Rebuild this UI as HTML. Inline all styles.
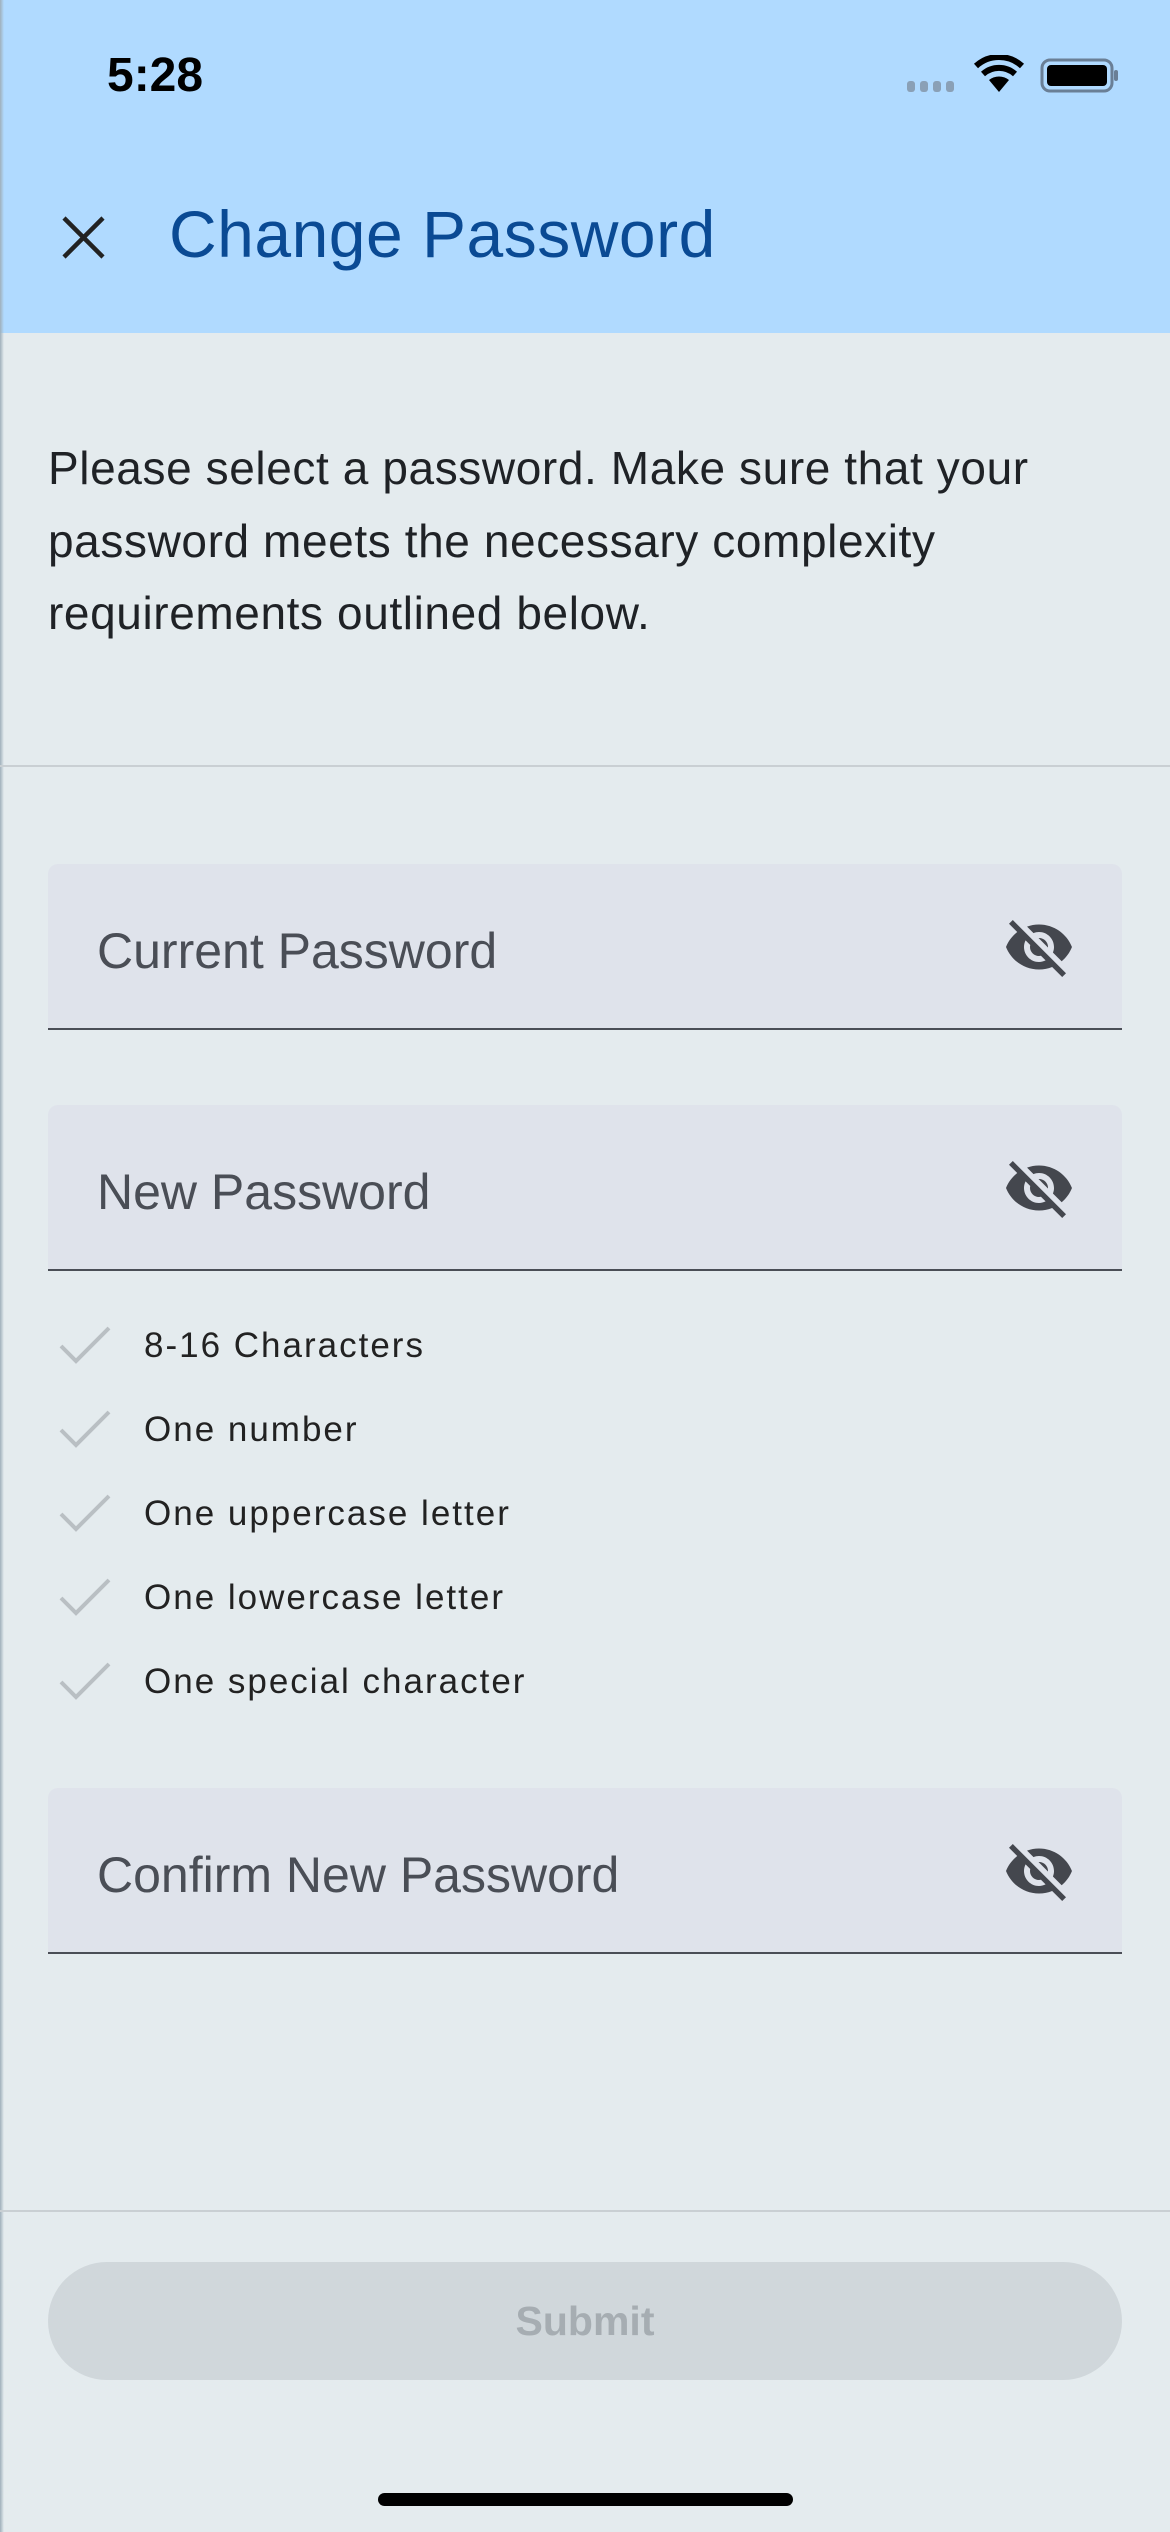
<!DOCTYPE html>
<html><head><meta charset="utf-8"><style>
*{margin:0;padding:0;box-sizing:border-box}
body{width:1170px;height:2532px;background:#e4ebee;font-family:"Liberation Sans",sans-serif;position:relative;overflow:hidden}
.hdr{position:absolute;left:0;top:0;width:1170px;height:333px;background:#b0daff}
.time{position:absolute;left:107px;top:48px;font-size:48px;font-weight:bold;color:#000}
.title{position:absolute;left:169px;top:196px;font-size:66px;color:#0a4a94;letter-spacing:0.5px}
.para{position:absolute;left:48px;top:432px;width:1110px;font-size:46px;line-height:72.5px;color:#1f2226;letter-spacing:0.6px}
.div{position:absolute;left:0;width:1170px;height:2px;background:#c9cfd3}
.field{position:absolute;left:48px;width:1074px;height:166px;background:#dfe3eb;border-radius:10px 10px 0 0;border-bottom:2px solid #4a4e56}
.field span{position:absolute;left:49px;top:58px;font-size:50px;color:#4a4e56}
.field svg{position:absolute;left:955px;top:47px}
.chk{position:absolute;left:58px;width:900px;height:50px}
.chk svg{position:absolute;left:0;top:0}
.chk span{position:absolute;left:86px;top:6px;font-size:35px;color:#222;letter-spacing:2px}
.btn{position:absolute;left:48px;top:2262px;width:1074px;height:118px;border-radius:59px;background:#d0d7db;color:#a6adb2;font-size:41px;font-weight:bold;text-align:center;line-height:118px}
.home{position:absolute;left:378px;top:2493px;width:415px;height:13px;border-radius:7px;background:#000}
</style></head><body>
<div class="hdr"></div>
<div style="position:absolute;left:0;top:0;width:4px;height:2532px;background:linear-gradient(90deg,#9fb0bb,transparent)"></div>
<div class="time">5:28</div>
<svg style="position:absolute;left:905px;top:55px" width="215" height="40" viewBox="0 0 215 40">
<g fill="#8aa0b6"><rect x="2" y="26" width="8" height="11" rx="3"/><rect x="15" y="26" width="8" height="11" rx="3"/><rect x="28" y="26" width="8" height="11" rx="3"/><rect x="41" y="26" width="8" height="11" rx="3"/></g>
<path d="M94 37 L84 25 A16 16 0 0 1 104 25 Z" fill="#000"/>
<path d="M78 19 A24 24 0 0 1 110 19" stroke="#000" stroke-width="6" fill="none"/>
<path d="M71 11 A34 34 0 0 1 117 11" stroke="#000" stroke-width="6" fill="none"/>
<rect x="137" y="5" width="70" height="31" rx="8" fill="none" stroke="#6a7f96" stroke-width="3"/>
<rect x="142" y="10" width="60" height="21" rx="4" fill="#000"/>
<rect x="209" y="15" width="4" height="11" rx="2" fill="#6a7f96"/>
</svg>
<svg style="position:absolute;left:61px;top:215px" width="45" height="45" viewBox="0 0 45 45"><path d="M3 3L42 42M42 3L3 42" stroke="#222" stroke-width="4.5"/></svg>
<div class="title">Change Password</div>
<div class="para">Please select a password. Make sure that your password meets the necessary complexity requirements outlined below.</div>
<div class="div" style="top:765px"></div>
<div class="field" style="top:864px"><span>Current Password</span><svg width="72" height="72" viewBox="0 0 24 24"><path fill="#44474e" d="M12 7c2.76 0 5 2.24 5 5 0 .65-.13 1.26-.36 1.83l2.92 2.92c1.51-1.26 2.7-2.89 3.43-4.75-1.73-4.39-6-7.5-11-7.5-1.4 0-2.74.25-3.98.7l2.16 2.16C10.74 7.13 11.35 7 12 7zM2 4.27l2.28 2.28.46.46C3.08 8.3 1.78 10.02 1 12c1.73 4.39 6 7.5 11 7.5 1.55 0 3.03-.3 4.38-.84l.42.42L19.73 22 21 20.73 3.27 3 2 4.27zM7.53 9.8l1.55 1.55c-.05.21-.08.43-.08.65 0 1.66 1.34 3 3 3 .22 0 .44-.03.65-.08l1.55 1.55c-.67.33-1.41.53-2.2.53-2.76 0-5-2.24-5-5 0-.79.2-1.53.53-2.2zm4.31-.78l3.15 3.150.02-.16c0-1.66-1.34-3-3-3l-.17.01z"/></svg></div>
<div class="field" style="top:1105px"><span>New Password</span><svg width="72" height="72" viewBox="0 0 24 24"><path fill="#44474e" d="M12 7c2.76 0 5 2.24 5 5 0 .65-.13 1.26-.36 1.83l2.92 2.92c1.51-1.26 2.7-2.89 3.43-4.75-1.73-4.39-6-7.5-11-7.5-1.4 0-2.74.25-3.98.7l2.16 2.16C10.74 7.13 11.35 7 12 7zM2 4.27l2.28 2.28.46.46C3.08 8.3 1.78 10.02 1 12c1.73 4.39 6 7.5 11 7.5 1.55 0 3.03-.3 4.38-.84l.42.42L19.73 22 21 20.73 3.27 3 2 4.27zM7.53 9.8l1.55 1.55c-.05.21-.08.43-.08.65 0 1.66 1.34 3 3 3 .22 0 .44-.03.65-.08l1.55 1.55c-.67.33-1.41.53-2.2.53-2.76 0-5-2.24-5-5 0-.79.2-1.53.53-2.2zm4.31-.78l3.15 3.15.02-.16c0-1.66-1.34-3-3-3l-.17.01z"/></svg></div>
<div class="chk" style="top:1320px"><svg width="54" height="48" viewBox="0 0 54 48"><path d="M3 26L18 41L51 8" stroke="#b9bfc3" stroke-width="4" fill="none"/></svg><span>8-16 Characters</span></div>
<div class="chk" style="top:1404px"><svg width="54" height="48" viewBox="0 0 54 48"><path d="M3 26L18 41L51 8" stroke="#b9bfc3" stroke-width="4" fill="none"/></svg><span>One number</span></div>
<div class="chk" style="top:1488px"><svg width="54" height="48" viewBox="0 0 54 48"><path d="M3 26L18 41L51 8" stroke="#b9bfc3" stroke-width="4" fill="none"/></svg><span>One uppercase letter</span></div>
<div class="chk" style="top:1572px"><svg width="54" height="48" viewBox="0 0 54 48"><path d="M3 26L18 41L51 8" stroke="#b9bfc3" stroke-width="4" fill="none"/></svg><span>One lowercase letter</span></div>
<div class="chk" style="top:1656px"><svg width="54" height="48" viewBox="0 0 54 48"><path d="M3 26L18 41L51 8" stroke="#b9bfc3" stroke-width="4" fill="none"/></svg><span>One special character</span></div>
<div class="field" style="top:1788px"><span>Confirm New Password</span><svg width="72" height="72" viewBox="0 0 24 24"><path fill="#44474e" d="M12 7c2.76 0 5 2.24 5 5 0 .65-.13 1.26-.36 1.83l2.92 2.92c1.51-1.26 2.7-2.89 3.43-4.75-1.73-4.39-6-7.5-11-7.5-1.4 0-2.74.25-3.98.7l2.16 2.16C10.74 7.13 11.35 7 12 7zM2 4.27l2.28 2.28.46.46C3.08 8.3 1.78 10.02 1 12c1.73 4.39 6 7.5 11 7.5 1.55 0 3.03-.3 4.38-.84l.42.42L19.73 22 21 20.73 3.27 3 2 4.27zM7.53 9.8l1.55 1.55c-.05.21-.08.43-.08.65 0 1.66 1.34 3 3 3 .22 0 .44-.03.65-.08l1.55 1.55c-.67.33-1.41.53-2.2.53-2.76 0-5-2.24-5-5 0-.79.2-1.53.53-2.2zm4.31-.78l3.15 3.15.02-.16c0-1.66-1.34-3-3-3l-.17.01z"/></svg></div>
<div class="div" style="top:2210px"></div>
<div class="btn">Submit</div>
<div class="home"></div>
</body></html>
